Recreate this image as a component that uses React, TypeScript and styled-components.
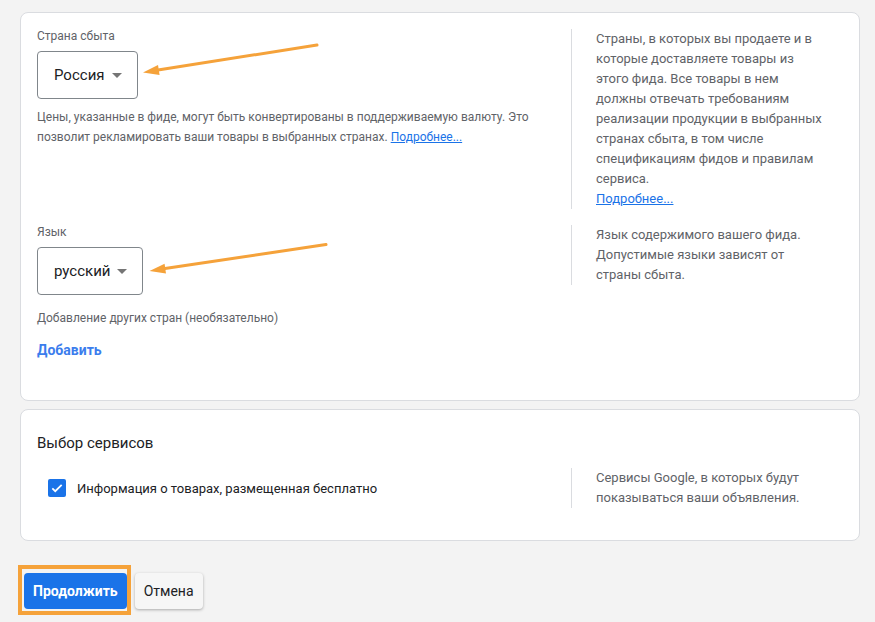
import React from "react";
import styled, { createGlobalStyle } from "styled-components";

const GlobalStyle = createGlobalStyle`
  body {
    margin: 0;
    background: #f3f3f3;
    font-family: Roboto, "Noto Sans", Arial, sans-serif;
  }
`;

const Page = styled.div`
  position: relative;
  padding: 12px 15px 0 20px;
  width: 875px;
  height: 622px;
  box-sizing: border-box;
`;

const Card = styled.section<{ $pt: number; $pb: number }>`
  background: #fff;
  border: 1px solid #dadce0;
  border-radius: 8px;
  padding: ${(p) => p.$pt}px 16px ${(p) => p.$pb}px 16px;
  margin-bottom: 8px;
`;

const Row = styled.div<{ $center?: boolean; $mt?: number }>`
  display: flex;
  align-items: ${(p) => (p.$center ? "center" : "stretch")};
  margin-top: ${(p) => p.$mt || 0}px;
`;

const Main = styled.div`
  flex: 1;
  display: flex;
  flex-direction: column;
  align-items: flex-start;
`;

const Aside = styled.div`
  width: 272px;
  box-sizing: border-box;
  align-self: flex-start;
  border-left: 1px solid #dadce0;
  padding: 0 8px 0 24px;
  font-size: 13px;
  line-height: 20px;
  color: #5f6368;
`;

const Label = styled.div`
  font-size: 12px;
  line-height: 14px;
  color: #5f6368;
`;

const Select = styled.div`
  margin-top: 8px;
  height: 48px;
  box-sizing: border-box;
  display: flex;
  align-items: center;
  gap: 7px;
  padding: 0 15px 0 16px;
  border: 1px solid #80868b;
  border-radius: 4px;
  font-size: 15px;
  color: #202124;
`;

const Caret = styled.span`
  width: 0;
  height: 0;
  border-left: 5px solid transparent;
  border-right: 5px solid transparent;
  border-top: 5px solid #757575;
  margin-top: 1px;
`;

const Help = styled.p<{ $mt: number; $lh: number }>`
  margin: ${(p) => p.$mt}px 0 0;
  font-size: 12px;
  line-height: ${(p) => p.$lh}px;
  color: #5f6368;
`;

const Link = styled.a`
  color: #1a73e8;
  text-decoration: underline;
`;

const AddLink = styled.a`
  margin-top: 14px;
  font-size: 14px;
  line-height: 20px;
  font-weight: 700;
  color: #3b7ded;
`;

const Title = styled.h2`
  margin: 0;
  font-size: 15px;
  line-height: 22px;
  font-weight: 400;
  color: #202124;
`;

const CheckRow = styled.label`
  flex: 1;
  display: flex;
  align-items: center;
  gap: 11px;
  padding-left: 11px;
  font-size: 13px;
  color: #202124;
`;

const Box = styled.span`
  width: 18px;
  height: 18px;
  border-radius: 2px;
  background: #1a73e8;
  display: flex;
  align-items: center;
  justify-content: center;
`;

const Actions = styled.div`
  display: flex;
  gap: 8px;
  margin-top: 32px;
  padding-left: 4px;
`;

const Button = styled.button<{ $primary?: boolean }>`
  position: relative;
  height: 36px;
  padding: 0 9px;
  border: none;
  border-radius: 4px;
  font-family: Roboto, Arial, sans-serif;
  font-size: 14px;
  font-weight: ${(p) => (p.$primary ? 700 : 400)};
  color: ${(p) => (p.$primary ? "#fff" : "#202124")};
  background: ${(p) => (p.$primary ? "#1a73e8" : "#f6f6f6")};
  box-shadow: ${(p) => (p.$primary ? "none" : "0 1px 3px rgba(0,0,0,0.3)")};
`;

const Highlight = styled.span`
  position: absolute;
  top: -8px;
  left: -6px;
  right: -4px;
  bottom: -6px;
  border: 4px solid #f5a23a;
`;

const Overlay = styled.svg`
  position: absolute;
  left: 0;
  top: 0;
  pointer-events: none;
`;

const ORANGE = "#f5a23a";

export default function App() {
  return (
    <>
      <GlobalStyle />
      <Page>
        <Card $pt={16} $pb={40}>
          <Row>
            <Main>
              <Label>Страна сбыта</Label>
              <Select>
                Россия <Caret />
              </Select>
              <Help $mt={8} $lh={20}>
                Цены, указанные в фиде, могут быть конвертированы в поддерживаемую валюту. Это
                <br />
                позволит рекламировать ваши товары в выбранных странах. <Link>Подробнее...</Link>
              </Help>
            </Main>
            <Aside>
              Страны, в которых вы продаете и в
              <br />
              которые доставляете товары из
              <br />
              этого фида. Все товары в нем
              <br />
              должны отвечать требованиям
              <br />
              реализации продукции в выбранных
              <br />
              странах сбыта, в том числе
              <br />
              спецификациям фидов и правилам
              <br />
              сервиса.
              <br />
              <Link>Подробнее...</Link>
            </Aside>
          </Row>
          <Row $mt={16}>
            <Main>
              <Label>Язык</Label>
              <Select>
                русский <Caret />
              </Select>
              <Help $mt={15} $lh={16}>
                Добавление других стран (необязательно)
              </Help>
              <AddLink>Добавить</AddLink>
            </Main>
            <Aside>
              Язык содержимого вашего фида.
              <br />
              Допустимые языки зависят от
              <br />
              страны сбыта.
            </Aside>
          </Row>
        </Card>

        <Card $pt={22} $pb={32}>
          <Title>Выбор сервисов</Title>
          <Row $center $mt={14}>
            <CheckRow>
              <Box>
                <svg width="14" height="14" viewBox="0 0 24 24">
                  <path d="M4 12.5l5 5L20 6.5" fill="none" stroke="#fff" strokeWidth="3" />
                </svg>
              </Box>
              Информация о товарах, размещенная бесплатно
            </CheckRow>
            <Aside>
              Сервисы Google, в которых будут
              <br />
              показываться ваши объявления.
            </Aside>
          </Row>
        </Card>

        <Actions>
          <Button $primary>
            Продолжить
            <Highlight />
          </Button>
          <Button>Отмена</Button>
        </Actions>

        <Overlay width="875" height="622">
          <line x1="317" y1="45" x2="158" y2="70" stroke={ORANGE} strokeWidth="3" strokeLinecap="round" />
          <polygon points="143,72.5 159.6,74.9 158,65.1" fill={ORANGE} />
          <line x1="326" y1="244.5" x2="165" y2="268.6" stroke={ORANGE} strokeWidth="3" strokeLinecap="round" />
          <polygon points="149.5,271 166,273.5 164.6,263.7" fill={ORANGE} />
        </Overlay>
      </Page>
    </>
  );
}
